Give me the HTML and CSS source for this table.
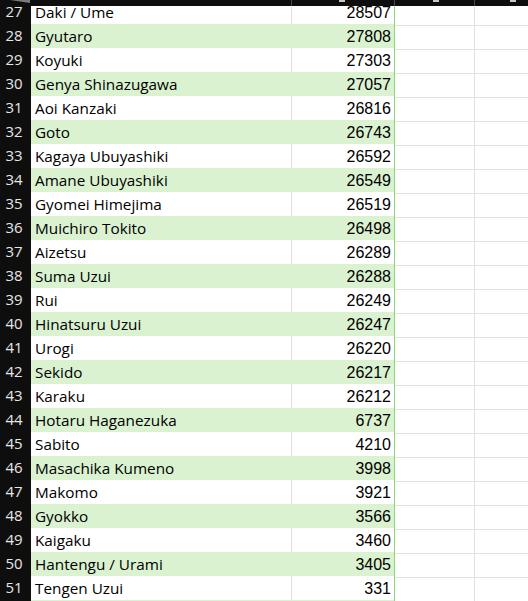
FILE: index.html
```html
<!DOCTYPE html>
<html>
<head>
<meta charset="utf-8">
<link rel="stylesheet" href="styles.css">
</head>
<body>
<div class="sheet">
  <div class="colhead">
    <span class="corner"></span>
    <span class="sep s1"></span>
    <span class="sep s2"></span>
    <span class="sep s3"></span>
    <span class="mark m1"></span>
    <span class="mark m2"></span>
    <span class="mark m3"></span>
  </div>
  <div class="grid" id="grid"></div>
</div>
<script>
const data = [
["27","Daki / Ume","28507"],
["28","Gyutaro","27808"],
["29","Koyuki","27303"],
["30","Genya Shinazugawa","27057"],
["31","Aoi Kanzaki","26816"],
["32","Goto","26743"],
["33","Kagaya Ubuyashiki","26592"],
["34","Amane Ubuyashiki","26549"],
["35","Gyomei Himejima","26519"],
["36","Muichiro Tokito","26498"],
["37","Aizetsu","26289"],
["38","Suma Uzui","26288"],
["39","Rui","26249"],
["40","Hinatsuru Uzui","26247"],
["41","Urogi","26220"],
["42","Sekido","26217"],
["43","Karaku","26212"],
["44","Hotaru Haganezuka","6737"],
["45","Sabito","4210"],
["46","Masachika Kumeno","3998"],
["47","Makomo","3921"],
["48","Gyokko","3566"],
["49","Kaigaku","3460"],
["50","Hantengu / Urami","3405"],
["51","Tengen Uzui","331"],
["","",""]
];
const g = document.getElementById('grid');
let html = '';
data.forEach(([n, name, val], i) => {
  const band = (i % 2 === 1) ? ' band' : '';
  html += '<div class="row' + band + '">' +
    '<div class="rh">' + n + '</div>' +
    '<div class="ca">' + name + '</div>' +
    '<div class="cb">' + val + '</div>' +
    '<div class="cc"></div>' +
    '<div class="cd"></div>' +
    '</div>';
});
g.innerHTML = html;
</script>
</body>
</html>
```
FILE: styles.css
```css
html, body {
  margin: 0;
  padding: 0;
  background: #ffffff;
  overflow: hidden;
}
.sheet {
  position: relative;
  width: 528px;
  height: 601px;
  overflow: hidden;
}
.colhead {
  position: absolute;
  left: 0;
  top: 0;
  width: 528px;
  height: 6px;
  background: #0e0e0e;
  z-index: 2;
}
.corner {
  position: absolute;
  left: 10px;
  top: 0;
  width: 0;
  height: 0;
  border-left: 20px solid transparent;
  border-top: 3px solid #7a7a7a;
}
.sep {
  position: absolute;
  top: 0;
  width: 1px;
  height: 6px;
  background: #4a4a4a;
}
.s1 { left: 291px; }
.s2 { left: 394px; }
.s3 { left: 474px; }
.mark {
  position: absolute;
  top: 0;
  width: 6px;
  height: 2px;
  background: #c8c8c8;
}
.m1 { left: 339px; }
.m2 { left: 433px; }
.m3 { left: 510px; }
.grid {
  display: flex;
  flex-direction: column;
}
.row {
  display: grid;
  grid-template-columns: 31px 261px 103px 80px 1fr;
  height: 24px;
}
.rh {
  background: #0e0e0e;
  color: #e6e6e6;
  font-family: "Open Sans", sans-serif;
  font-size: 15px;
  line-height: 23px;
  text-align: center;
  padding-right: 3px;
  border-bottom: 1px solid #3a3a3a;
  box-sizing: border-box;
}
.ca, .cb {
  background: #ffffff;
  color: #000000;
  border-bottom: 1px solid #8ed973;
  box-sizing: border-box;
  white-space: nowrap;
}
.ca {
  font-family: "Open Sans", sans-serif;
  font-size: 15.3px;
  line-height: 24px;
  padding-left: 4px;
  border-right: 1px solid #e1e1e1;
}
.cb {
  font-family: "Liberation Sans", Arial, sans-serif;
  font-size: 16px;
  line-height: 25px;
  text-align: right;
  padding-right: 3px;
  border-right: 1px solid #8ed973;
}
.band .ca, .band .cb {
  background: #daf2d0;
}
.band .ca {
  border-right-color: #daf2d0;
}
.cc, .cd {
  border-bottom: 1px solid #e1e1e1;
  box-sizing: border-box;
}
.cc {
  border-right: 1px solid #e1e1e1;
}
```
